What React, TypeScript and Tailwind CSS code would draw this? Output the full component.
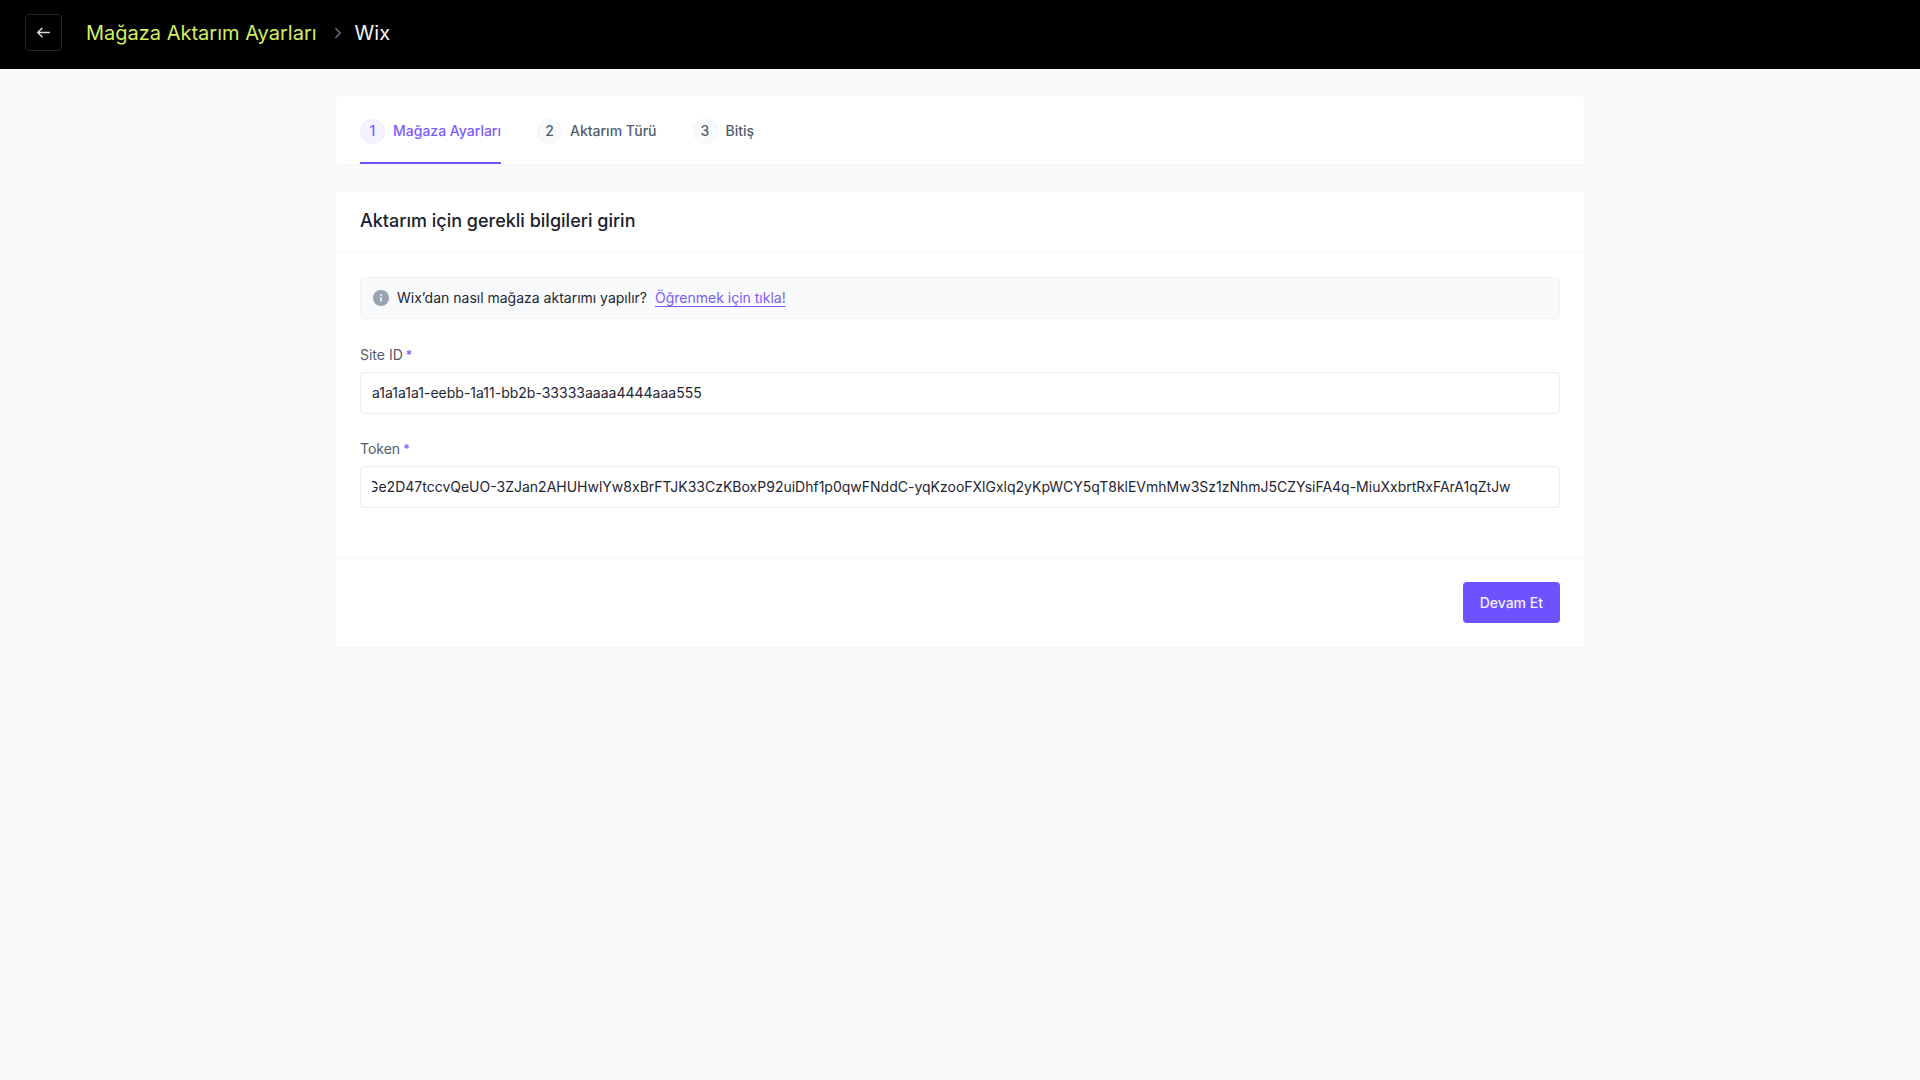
import React, { useLayoutEffect, useRef } from 'react';
import { ChevronRight } from 'lucide-react';

const steps = [
  { id: 1, label: 'Mağaza Ayarları', active: true },
  { id: 2, label: 'Aktarım Türü', active: false },
  { id: 3, label: 'Bitiş', active: false }
];

const TOKEN =
  'Ge2D47tccvQeUO-3ZJan2AHUHwlYw8xBrFTJK33CzKBoxP92uiDhf1p0qwFNddC-yqKzooFXlGxlq2yKpWCY5qT8klEVmhMw3Sz1zNhmJ5CZYsiFA4q-MiuXxbrtRxFArA1qZtJw';

const BackIcon: React.FC = () => (
  <svg
    viewBox="0 0 17 17"
    className="h-[17px] w-[17px]"
    fill="none"
    stroke="currentColor"
    strokeWidth="1.5"
    strokeLinecap="round"
    strokeLinejoin="round"
    aria-hidden="true"
  >
    <path d="M14.3 8.5H2.7M7 4.2 2.7 8.5 7 12.8" />
  </svg>
);

const Header: React.FC = () => (
  <header className="flex h-[69px] items-center bg-black px-[25px] pb-1">
    <button
      type="button"
      aria-label="Geri"
      className="flex h-[37px] w-[37px] items-center justify-center rounded border border-[#1f2733] text-[#d5dae3]"
    >
      <BackIcon />
    </button>
    <nav className="ml-6 flex items-center text-xl leading-7">
      <a href="#ayarlar" className="text-[#d3ee62]">
        Mağaza Aktarım Ayarları
      </a>
      <ChevronRight className="mr-2 ml-3 h-[18px] w-[18px] text-[#667085]" strokeWidth={2} />
      <span className="text-[#f5f5f7]">Wix</span>
    </nav>
  </header>
);

const Stepper: React.FC = () => (
  <ol className="flex gap-9 rounded-[5px] border border-[#f3f5f9] bg-white px-[25px]">
    {steps.map((step) => (
      <li
        key={step.id}
        className={`flex h-[68px] items-center gap-2 border-b-2 pt-1 text-sm font-medium ${
          step.active ? 'border-[#6f52ff] text-[#7a5cff]' : 'border-transparent text-[#525d6e]'
        }`}
      >
        <span
          className={`flex h-[25px] w-[25px] items-center justify-center rounded-full border ${
            step.active ? 'border-[#f0ecff] bg-[#f5f3ff]' : 'border-[#f1f4f9] bg-[#f8fafc]'
          }`}
        >
          {step.id}
        </span>
        {step.label}
      </li>
    ))}
  </ol>
);

interface FieldProps {
  id: string;
  label: string;
  value: string;
}

const Field: React.FC<FieldProps> = ({ id, label, value }) => {
  const inputRef = useRef<HTMLInputElement>(null);

  // keep the end of long values in view
  useLayoutEffect(() => {
    const input = inputRef.current;
    if (input) input.scrollLeft = input.scrollWidth;
  }, []);

  return (
    <div>
      <label htmlFor={id} className="flex gap-[3px] text-sm leading-5 text-[#525d6e]">
        {label}
        <span className="text-xs leading-5 font-semibold text-[#7a5cff]">*</span>
      </label>
      <input
        ref={inputRef}
        id={id}
        type="text"
        defaultValue={value}
        className="mt-[7px] h-[42px] w-full rounded border border-[#e9edf3] bg-white pr-12 pb-[2px] pl-[11px] text-sm text-[#1f2633] outline-none"
      />
    </div>
  );
};

const InfoIcon: React.FC = () => (
  <svg viewBox="0 0 16 16" className="h-4 w-4" aria-hidden="true">
    <circle cx="8" cy="8" r="8" fill="#98a2b3" />
    <rect x="7.2" y="7" width="1.6" height="4.6" rx="0.6" fill="#f8fafc" />
    <circle cx="8" cy="4.9" r="1" fill="#f8fafc" />
  </svg>
);

const App: React.FC = () => {
  return (
    <div className="min-h-screen bg-[#f8fafc] font-['Inter',sans-serif]">
      <Header />
      <main className="mx-auto flex w-full max-w-[1252px] flex-col gap-[25px] pt-[26px]">
        <Stepper />

        <section className="rounded-[5px] border border-[#f3f5f9] bg-white">
          <h1 className="border-b border-[#f3f5f9] px-[25px] py-4 text-lg leading-7 font-medium text-[#1a212e]">
            Aktarım için gerekli bilgileri girin
          </h1>

          <form>
            <div className="flex flex-col gap-[25px] px-[25px] pt-[25px] pb-[49px]">
              <div className="mb-[1px] flex h-[42px] items-center gap-2 rounded border border-[#f1f4f9] bg-[#f8fafc] px-3 text-sm text-[#1f2633]">
                <InfoIcon />
                <p>
                  Wix’dan nasıl mağaza aktarımı yapılır?
                  <a href="#yardim" className="ml-2 text-[#7a5cff] underline underline-offset-[3px]">
                    Öğrenmek için tıkla!
                  </a>
                </p>
              </div>
              <Field id="site-id" label="Site ID" value="a1a1a1a1-eebb-1a11-bb2b-33333aaaa4444aaa555" />
              <Field id="token" label="Token" value={TOKEN} />
            </div>

            <div className="flex justify-end border-t border-[#f3f5f9] px-[25px] py-6">
              <button
                type="button"
                className="h-[41px] rounded bg-[#6f52ff] px-[17px] text-sm font-medium text-[#f3f0ff]"
              >
                Devam Et
              </button>
            </div>
          </form>
        </section>
      </main>
    </div>
  );
};

export default App;
